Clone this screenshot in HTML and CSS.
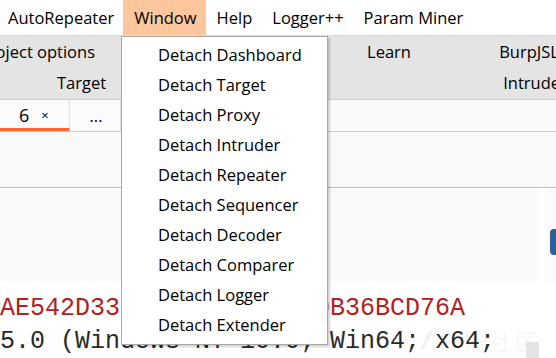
FILE: index.html
```html
<!DOCTYPE html>
<html>
<head>
<meta charset="utf-8">
<link rel="stylesheet" href="styles.css">
</head>
<body>
<div class="screen">
  <div class="menubar">
    <span class="mi first">AutoRepeater</span>
    <span class="mi active">Window</span>
    <span class="mi">Help</span>
    <span class="mi">Logger++</span>
    <span class="mi">Param Miner</span>
  </div>
  <div class="tabstrip">
    <div class="row row1">
      <span class="cell">Project options</span>
      <span class="cell">User options</span>
      <span class="cell">Learn</span>
      <span class="cell">BurpJSLinkFinder</span>
    </div>
    <div class="row row2">
      <span class="cell c-target">Target</span>
      <span class="cell c-proxy">Proxy</span>
      <span class="cell c-intruder">Intruder</span>
    </div>
  </div>
  <div class="subtabs">
    <div class="stab current"><span class="num">6</span><span class="close">×</span></div>
    <div class="stab more">...</div>
    <div class="rest"></div>
  </div>
  <div class="toolbar"></div>
  <div class="panels">
    <div class="panel main"></div>
    <div class="panel side"><div class="knob"></div></div>
  </div>
  <div class="code">
    <div class="line red">AE542D3300000000000000B36BCD76A</div>
    <div class="line">5.0 (Windows NT 10.0; Win64; x64;</div>
  </div>
  <div class="watermark"><span class="logo"></span>先知社区</div>
  <div class="wm-square"></div>
  <div class="menu">
    <div class="item">Detach Dashboard</div>
    <div class="item">Detach Target</div>
    <div class="item">Detach Proxy</div>
    <div class="item">Detach Intruder</div>
    <div class="item">Detach Repeater</div>
    <div class="item">Detach Sequencer</div>
    <div class="item">Detach Decoder</div>
    <div class="item">Detach Comparer</div>
    <div class="item">Detach Logger</div>
    <div class="item">Detach Extender</div>
  </div>
</div>
</body>
</html>
```
FILE: styles.css
```css
* { box-sizing: border-box; }
body {
  margin: 0;
  width: 556px;
  height: 358px;
  overflow: hidden;
  background: #fff;
  font-family: "Open Sans", "Noto Sans", sans-serif;
  color: #000;
}
.screen {
  position: relative;
  width: 556px;
  height: 358px;
  overflow: hidden;
}
.menubar {
  display: flex;
  height: 36px;
  font-size: 16.5px;
  border-bottom: 1px solid #dcdcdc;
  background: #fff;
}
.mi {
  display: flex;
  align-items: center;
  padding: 0 9px 0 11px;
  white-space: nowrap;
}
.mi.first { margin-left: -3px; }
.mi.active { background: #fdc69c; }

.tabstrip {
  background: #e4e4e4;
  height: 64px;
  border-bottom: 1px solid #cfcfcf;
  font-size: 16.5px;
}
.row {
  display: flex;
  height: 31px;
  align-items: center;
  white-space: nowrap;
}
.row1 { margin-left: -51px; }
.row1 .cell { flex: 0 0 176px; text-align: center; }
.row2 { margin-left: -21px; }
.row2 .cell { text-align: center; }
.row2 .c-target { flex: 0 0 205px; }
.row2 .c-proxy { flex: 0 0 110px; }
.row2 .c-intruder { flex: 0 0 482px; }

.subtabs {
  display: flex;
  height: 32px;
  background: #fafafa;
  border-bottom: 1px solid #cdcdcd;
  font-size: 16.5px;
}
.stab {
  display: flex;
  align-items: center;
  justify-content: center;
  border-right: 1px solid #e2e2e2;
  background: #fbfbfb;
}
.stab.current {
  width: 70px;
  border-bottom: 3px solid #ff6633;
  padding: 2px 0 0 0;
  justify-content: flex-start;
}
.stab.current .num { font-size: 18px; margin-left: 19px; }
.stab.current .close { font-size: 13px; margin-left: 12px; }
.stab.more { width: 51px; padding-left: 2px; }
.rest { flex: 1; }

.toolbar {
  height: 56px;
  background: #f9f9f9;
  border-bottom: 1px solid #bdbdbd;
}
.panels {
  display: flex;
  gap: 6px;
  height: 93px;
}
.panel { background: #fafafa; }
.panel.main { width: 539px; }
.panel.side { flex: 1; display: flex; align-items: center; justify-content: flex-end; padding-top: 14px; }
.knob {
  width: 6px;
  height: 26px;
  background: #2b5f9d;
  border-radius: 4px 0 0 4px;
}

.code {
  font-family: "Liberation Mono", monospace;
  font-size: 25px;
  line-height: 33px;
  padding-top: 11px;
  color: #2a2a2a;
}
.line { white-space: pre; }
.line.red { color: #b02222; }

.watermark {
  position: absolute;
  left: 420px;
  top: 323px;
  display: flex;
  align-items: center;
  gap: 4px;
  font-family: "Noto Sans CJK SC", sans-serif;
  font-size: 23px;
  letter-spacing: 3px;
  color: rgba(0, 0, 0, 0.055);
  white-space: nowrap;
}
.watermark .logo {
  width: 13px;
  height: 18px;
  background: rgba(0, 0, 0, 0.05);
  clip-path: polygon(70% 0, 100% 0, 30% 100%, 0 100%);
}
.wm-square {
  position: absolute;
  left: 526px;
  top: 342px;
  width: 13px;
  height: 16px;
  background: #e4e4e4;
}

.menu {
  position: absolute;
  left: 121px;
  top: 36px;
  width: 207px;
  height: 309px;
  background: #fff;
  border: 1px solid #a8a8a8;
  box-shadow: 2px 2px 2px rgba(0, 0, 0, 0.18);
  padding-top: 2px;
  font-size: 16.5px;
}
.item {
  height: 30px;
  display: flex;
  align-items: center;
  padding-left: 36px;
  white-space: nowrap;
}
```
